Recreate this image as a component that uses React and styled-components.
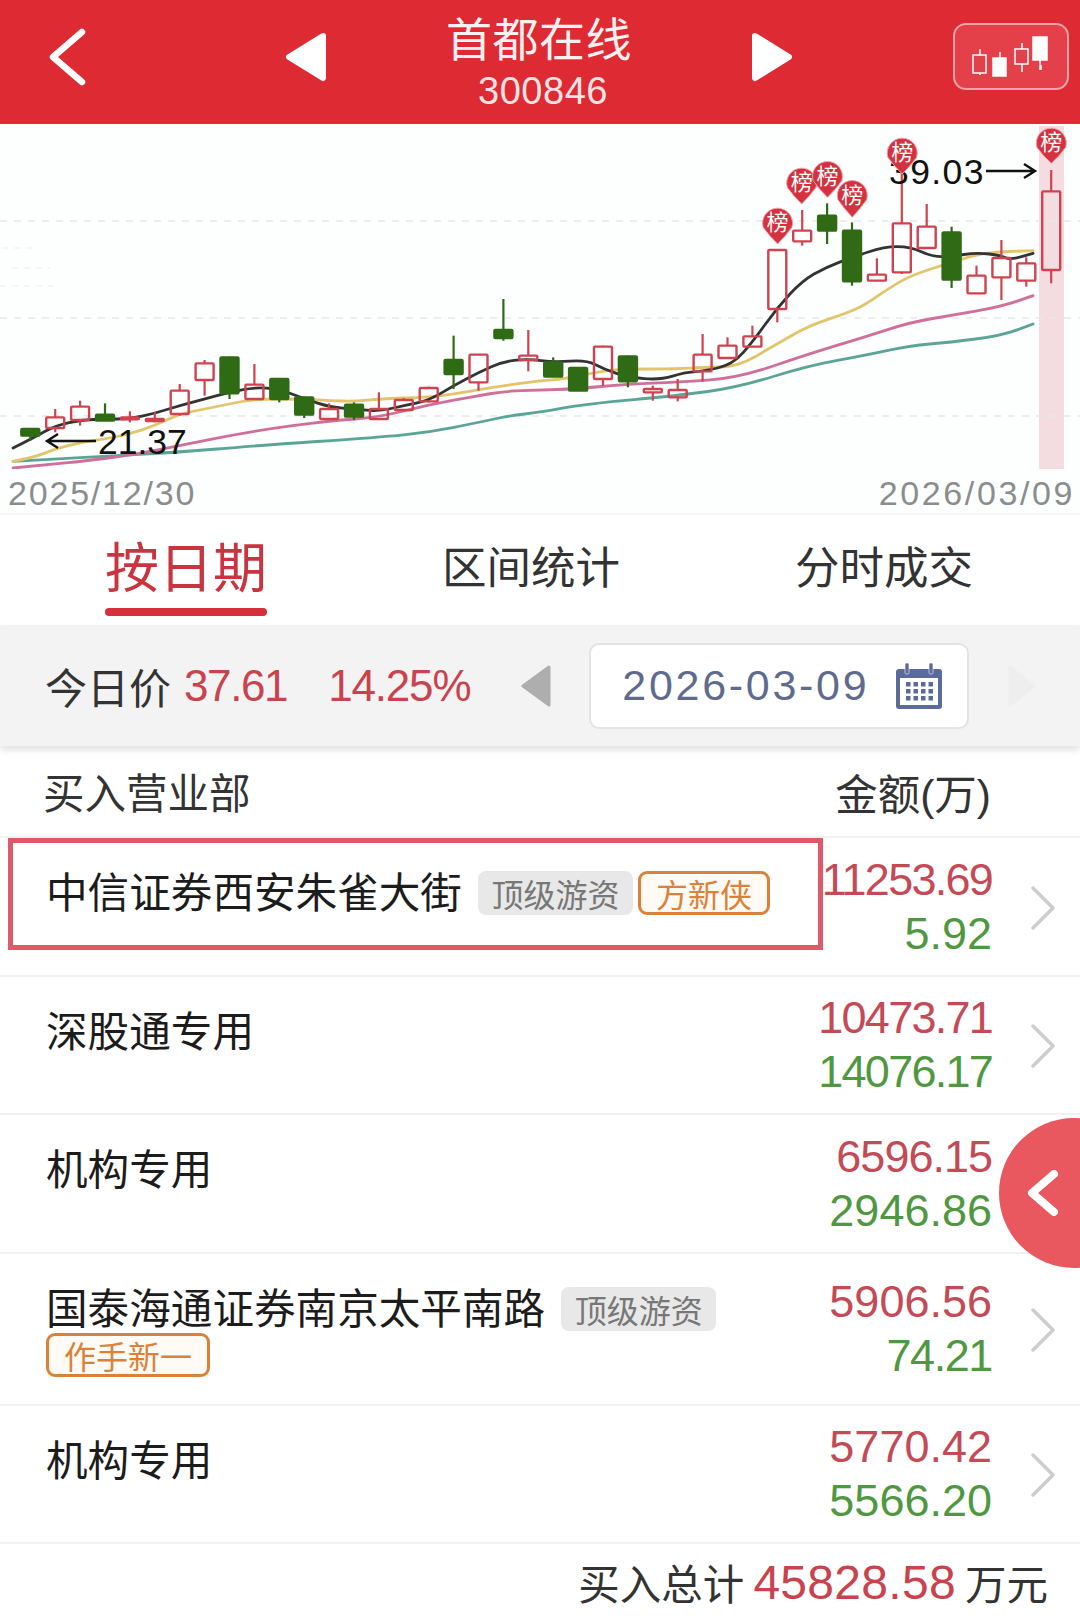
import React from 'react';
import styled, { createGlobalStyle } from 'styled-components';

const Global = createGlobalStyle`
  html, body { margin: 0; padding: 0; background: #fff; }
  body { font-family: "Liberation Sans", "Noto Sans CJK SC", sans-serif; color: #222; }
`;

const Page = styled.div`
  position: relative;
  width: 1080px;
  height: 1620px;
  overflow: hidden;
  background: #fff;
`;

/* ---------- header ---------- */
const Header = styled.header`
  display: grid;
  grid-template-columns: 236px 43px 1fr 43px 286px;
  align-items: center;
  height: 124px;
  padding: 0 0 10px 48px;
  background: #de2a33;
  box-sizing: border-box;
  border-bottom: 1px solid #d9353d;
`;
const TitleBlock = styled.div`
  display: flex;
  flex-direction: column;
  align-items: center;
  color: #fff;
  margin-top: 10px;
`;
const Title = styled.div`
  font-size: 46px;
  line-height: 56px;
  color: #fdf0f0;
  letter-spacing: 0.5px;
`;
const Code = styled.div`
  font-size: 38px;
  line-height: 40px;
  margin: 3px 0 0 8px;
  letter-spacing: 0.5px;
  color: #fbe3e3;
`;
const KlineButton = styled.div`
  justify-self: end;
  display: flex;
  width: 116px;
  height: 67px;
  margin-right: 11px;
  box-sizing: border-box;
  border: 2px solid #f3a3a8;
  border-radius: 13px;
  background: #e3404a;
`;

/* ---------- chart ---------- */
const ChartPanel = styled.section`
  background: #fdfefe;
  border-bottom: 2px solid #f4f5f5;
  height: 391px;
  box-sizing: border-box;
`;
const ChartSvg = styled.svg`
  display: block;
  width: 1080px;
  height: 345px;
`;
const ChartLabel = styled.text`
  font-family: "Liberation Sans", sans-serif;
  font-size: 35.5px;
  fill: #111;
`;
const PinText = styled.text`
  font-family: "Noto Sans CJK SC", sans-serif;
  font-size: 22px;
  fill: #fff;
  text-anchor: middle;
`;
const DateAxis = styled.div`
  display: flex;
  justify-content: space-between;
  padding: 5px 5px 0 8px;
  font-size: 34px;
  line-height: 38px;
  color: #8a8d8e;
`;
const AxisDate = styled.span`
  letter-spacing: ${p => p.$spacing}px;
`;

/* ---------- tabs ---------- */
const Tabs = styled.nav`
  display: flex;
  justify-content: space-between;
  align-items: flex-start;
  height: 110px;
  padding: 24px 107px 0 105px;
  box-sizing: border-box;
`;
const Tab = styled.div`
  display: flex;
  flex-direction: column;
  align-items: center;
  font-size: ${p => (p.$active ? '54px' : '44.5px')};
  line-height: 60px;
  color: ${p => (p.$active ? '#c9343e' : '#333')};
`;
const TabBar = styled.div`
  width: 162px;
  height: 8px;
  margin-top: 9px;
  border-radius: 4px;
  background: #d42f3a;
`;

/* ---------- toolbar ---------- */
const Toolbar = styled.div`
  position: relative;
  display: flex;
  align-items: center;
  height: 121px;
  padding-left: 45px;
  box-sizing: border-box;
  background: #f3f3f3;
  box-shadow: 0 5px 6px rgba(0, 0, 0, 0.1);
`;
const ToolLabel = styled.span`
  font-size: 42px;
  color: #333;
`;
const ToolValue = styled.span`
  font-size: 44px;
  color: #c9434e;
  margin-left: ${p => p.$gap}px;
  letter-spacing: ${p => p.$spacing}px;
`;
const ArrowLeft = styled.svg`
  display: block;
  margin-left: 50px;
`;
const ArrowRight = styled.svg`
  display: block;
`;
const DateBox = styled.div`
  display: flex;
  align-items: center;
  justify-content: space-between;
  width: 380px;
  height: 86px;
  margin: 0 38px 0 37px;
  padding: 0 24px 0 31px;
  box-sizing: border-box;
  background: #fff;
  border: 2px solid #e2e3e5;
  border-radius: 10px;
  font-size: 43px;
  letter-spacing: 2.7px;
  color: #5f6b8e;
`;

/* ---------- table ---------- */
const TableHead = styled.div`
  display: flex;
  justify-content: space-between;
  align-items: center;
  height: 92px;
  padding: 0 89px 0 43px;
  box-sizing: border-box;
  border-bottom: 2px solid #f1f1f1;
  font-size: 41.5px;
  color: #333;
`;
const HeadAmount = styled.span`
  font-size: 42.5px;
`;
const Row = styled.div`
  position: relative;
  display: flex;
  align-items: center;
  min-height: ${p => p.$height}px;
  box-sizing: border-box;
  padding-left: 46px;
  border-bottom: 2px solid #f1f1f1;
`;
const NameCell = styled.div`
  align-self: flex-start;
  display: flex;
  flex-wrap: wrap;
  align-items: center;
  column-gap: 5px;
  row-gap: 0;
  width: 750px;
  padding: 33px 0 25px;
`;
const Name = styled.span`
  font-size: 41.6px;
  line-height: 46px;
  color: #1c1c1c;
  margin-right: 11px;
`;
const TagGray = styled.span`
  display: inline-flex;
  align-items: center;
  justify-content: center;
  width: 155px;
  height: 44px;
  margin-bottom: 2px;
  border-radius: 8px;
  background: #e8e8e8;
  font-size: 32px;
  color: #777;
`;
const TagOrange = styled.span`
  display: inline-flex;
  align-items: center;
  justify-content: center;
  height: 44px;
  margin-bottom: 2px;
  padding: 0 15px;
  box-sizing: border-box;
  border: 3px solid #d9823b;
  border-radius: 9px;
  background: #fffaf4;
  font-size: 32px;
  color: #d9823b;
`;
const Amounts = styled.div`
  flex: 1;
  display: flex;
  flex-direction: column;
  align-items: flex-end;
  font-size: 45px;
  line-height: 54px;
`;
const Amount = styled.span`
  color: ${p => (p.$buy ? '#c44a55' : '#4f983f')};
  letter-spacing: ${p => p.$spacing}px;
`;
const ChevronWrap = styled.div`
  display: flex;
  width: 88px;
  padding: 2px 0 0 38px;
  box-sizing: border-box;
`;
const Highlight = styled.div`
  position: absolute;
  left: 8px;
  top: 0;
  width: 815px;
  height: 112px;
  box-sizing: border-box;
  border: 5px solid #de5a68;
  pointer-events: none;
`;
const Total = styled.footer`
  display: flex;
  justify-content: flex-end;
  align-items: center;
  gap: 9px;
  height: 76px;
  padding-right: 32px;
  box-sizing: border-box;
  font-size: 41.5px;
  color: #333;
`;
const TotalValue = styled.span`
  font-size: 48px;
  letter-spacing: 0.3px;
  color: #c9434e;
`;
const FloatButton = styled.div`
  position: absolute;
  left: 999px;
  top: 1118px;
  width: 150px;
  height: 150px;
  border-radius: 50%;
  background: #e9575f;
  display: flex;
  align-items: center;
  padding-left: 27px;
  box-sizing: border-box;
`;

/* ---------- drawings ---------- */
const Triangle = ({ dir, fill = '#fff', w = 43, h = 50 }) => (
  <svg width={w} height={h} viewBox="0 0 43 50" style={{ display: 'block' }}>
    <path
      d={dir === 'left' ? 'M39 4 L5 25 L39 46 Z' : 'M4 4 L38 25 L4 46 Z'}
      fill={fill}
      stroke={fill}
      strokeWidth="6"
      strokeLinejoin="round"
    />
  </svg>
);

const BackIcon = () => (
  <svg width="38" height="58" viewBox="0 0 38 58" style={{ display: 'block' }}>
    <path d="M34 4 L5 29 L34 54" fill="none" stroke="#fff" strokeWidth="6.5" strokeLinecap="round" strokeLinejoin="round" />
  </svg>
);

const KlineIcon = () => (
  <svg width="112" height="63" viewBox="0 0 112 63" style={{ display: 'block' }}>
    <g stroke="#fff" strokeWidth="1.5" fill="none">
      <path d="M25 24 V30 M25 48 V50" />
      <rect x="18" y="30" width="13" height="18" />
      <path d="M45 27 V33" />
      <rect x="38" y="33" width="13" height="18" fill="#fff" />
      <path d="M67 18 V24 M67 39 V47" />
      <rect x="60" y="24" width="13" height="15" />
      <path d="M86 40 V45" />
      <rect x="78" y="12" width="14" height="23" fill="#fff" />
      <path d="M85 35 V45" />
    </g>
  </svg>
);

const Calendar = () => (
  <svg width="48" height="46" viewBox="0 0 48 46" style={{ display: 'block' }}>
    <rect x="1" y="6" width="46" height="40" rx="3" fill="#5a6a9c" />
    <rect x="5" y="15" width="38" height="27" fill="#fff" />
    <rect x="10" y="0" width="4" height="11" rx="1.5" fill="#5a6a9c" stroke="#fff" strokeWidth="0.6" />
    <rect x="34" y="0" width="4" height="11" rx="1.5" fill="#5a6a9c" stroke="#fff" strokeWidth="0.6" />
    {[19, 26, 33].map(y =>
      [11, 18.5, 26, 33.5].map(x => <rect key={`${x}-${y}`} x={x} y={y} width="4.5" height="4.5" fill="#5a6a9c" />)
    )}
  </svg>
);

const Chevron = () => (
  <svg width="26" height="44" viewBox="0 0 26 44" style={{ display: 'block' }}>
    <path d="M3 2 L23 22 L3 42" fill="none" stroke="#cdcdcd" strokeWidth="3.5" strokeLinecap="round" strokeLinejoin="round" />
  </svg>
);

const FloatChevron = () => (
  <svg width="32" height="46" viewBox="0 0 32 46" style={{ display: 'block' }}>
    <path d="M28 4 L6 23 L28 42" fill="none" stroke="#fff" strokeWidth="8" strokeLinejoin="round" strokeLinecap="round" />
  </svg>
);

/* Chart data is measured in a 2.904x / 3x space: x in 0..3136, y in 0..1035 */
const X = zx => zx / 2.904;
const Y = zy => zy / 3;

const candles = [
  ['g', 915, 915, 935, 950], ['r', 855, 880, 912, 925], ['r', 830, 848, 888, 905], ['g', 838, 872, 890, 890],
  ['r', 862, 880, 883, 895], ['r', 865, 885, 888, 895], ['r', 780, 800, 870, 875], ['r', 708, 718, 768, 815],
  ['g', 698, 700, 808, 825], ['r', 720, 782, 825, 825], ['g', 765, 765, 825, 835], ['g', 818, 820, 872, 882],
  ['r', 838, 855, 885, 888], ['g', 835, 842, 878, 888], ['r', 805, 855, 885, 885], ['r', 822, 828, 858, 862],
  ['r', 788, 792, 832, 835], ['g', 635, 708, 750, 795], ['r', 690, 692, 775, 800], ['g', 525, 618, 642, 650],
  ['r', 618, 695, 708, 742], ['g', 700, 715, 758, 760], ['g', 730, 732, 800, 800], ['r', 665, 668, 765, 785],
  ['g', 695, 697, 772, 790], ['r', 785, 795, 805, 830], ['r', 765, 798, 820, 832], ['r', 630, 692, 742, 772],
  ['r', 640, 665, 702, 705], ['r', 605, 637, 668, 670], ['r', 378, 378, 555, 595], ['r', 258, 320, 352, 365],
  ['g', 238, 275, 320, 360], ['g', 295, 320, 472, 485], ['r', 403, 452, 470, 472], ['r', 130, 298, 445, 450],
  ['r', 240, 308, 372, 375], ['g', 308, 325, 467, 492], ['r', 425, 455, 508, 508], ['r', 348, 402, 460, 528],
  ['r', 400, 418, 470, 488], ['r', 138, 202, 438, 478],
];

const R = 1568;
const lines = [
  {
    color: '#5aa596',
    pts: [[38, 1012], [235, 1000], [520, 985], [740, 965], [1100, 940], [1245, 925], [1391, 895], [1480, 875], [R, 865],
      [R + 130, 840], [R + 400, 815], [R + 575, 790], [R + 780, 725], [R + 940, 695], [R + 1075, 665], [R + 1190, 655], [R + 1340, 635], [R + 1432, 600]],
  },
  {
    color: '#cf6f9a',
    pts: [[38, 1032], [160, 1020], [235, 1012], [375, 995], [520, 965], [740, 920], [960, 890], [1100, 880], [1245, 842], [1391, 815], [1463, 802], [R, 798],
      [R + 100, 795], [R + 255, 780], [R + 400, 775], [R + 575, 762], [R + 780, 690], [R + 940, 640], [R + 1075, 595], [R + 1190, 575], [R + 1340, 548], [R + 1432, 515]],
  },
  {
    color: '#e2c46a',
    pts: [[38, 1012], [100, 1000], [160, 975], [235, 955], [305, 945], [375, 930], [450, 905], [520, 870], [595, 855], [665, 840], [740, 825], [885, 825], [960, 830], [1030, 832], [1100, 825], [1172, 822], [1245, 820], [1317, 810], [1391, 797], [1463, 785], [R, 770],
      [R + 70, 765], [R + 185, 740], [R + 255, 735], [R + 400, 735], [R + 472, 730], [R + 575, 728], [R + 680, 665], [R + 780, 605], [R + 885, 570], [R + 940, 545], [R + 1010, 495], [R + 1075, 455], [R + 1195, 415], [R + 1290, 385], [R + 1432, 380]],
  },
  {
    color: '#333',
    pts: [[38, 972], [100, 940], [160, 905], [235, 888], [305, 885], [375, 885], [450, 868], [520, 845], [595, 825], [665, 805], [740, 790], [810, 795], [885, 825], [960, 850], [1030, 855], [1100, 862], [1172, 845], [1245, 830], [1317, 785], [1391, 745], [1463, 712], [1536, 705],
      [R + 40, 715], [R + 135, 708], [R + 185, 735], [R + 255, 760], [R + 350, 768], [R + 420, 745], [R + 472, 742], [R + 560, 722], [R + 620, 650], [R + 690, 550], [R + 762, 470], [R + 830, 430], [R + 907, 400], [R + 1000, 368], [R + 1075, 368], [R + 1140, 398], [R + 1195, 398], [R + 1268, 385], [R + 1340, 395], [R + 1365, 408], [R + 1432, 388]],
  },
];

const smooth = pts => {
  const p = pts.map(([x, y]) => [X(x), Y(y)]);
  let d = `M${p[0][0]} ${p[0][1]}`;
  for (let i = 1; i < p.length - 1; i++) {
    const mx = (p[i][0] + p[i + 1][0]) / 2;
    const my = (p[i][1] + p[i + 1][1]) / 2;
    d += ` Q${p[i][0]} ${p[i][1]} ${mx} ${my}`;
  }
  const l = p[p.length - 1];
  return `${d} L${l[0]} ${l[1]}`;
};

const pins = [
  [R + 690, 295, 360], [R + 760, 175, 240], [R + 835, 155, 220], [R + 907, 212, 280], [R + 1052, 85, 150], [R + 1485, 55, 118],
];

const Pin = ({ zx, zy, tip }) => {
  const cx = X(zx);
  const cy = Y(zy);
  const ty = Y(tip);
  const r = 15;
  return (
    <g>
      <path
        d={`M${cx - r + 0.6} ${cy + 5} A${r} ${r} 0 1 1 ${cx + r - 0.6} ${cy + 5} Q${cx + 8} ${cy + 14} ${cx} ${ty} Q${cx - 8} ${cy + 14} ${cx - r + 0.6} ${cy + 5} Z`}
        fill="#d5323f"
        stroke="#f0a3aa"
        strokeWidth="1"
      />
      <PinText x={cx} y={cy + 8}>榜</PinText>
    </g>
  );
};

const Candle = ({ i, type, wt, bt, bb, wb }) => {
  const x = 30.3 + 24.9 * i;
  const color = type === 'g' ? '#2f6b14' : '#cf4350';
  const top = Y(bt);
  const h = Math.max(Y(bb) - top, 2);
  return (
    <g>
      <line x1={x} x2={x} y1={Y(wt)} y2={top} stroke={color} strokeWidth="2.2" />
      <line x1={x} x2={x} y1={top + h} y2={Y(wb)} stroke={color} strokeWidth="2.2" />
      <rect
        x={x - 9}
        y={top}
        width="18"
        height={h}
        rx="1"
        fill={type === 'g' ? color : 'none'}
        stroke={color}
        strokeWidth="2.4"
      />
    </g>
  );
};

const Chart = () => (
  <ChartSvg viewBox="0 0 1080 345">
    <rect x="1039" y="2" width="25" height="343" fill="#f5dce1" />
    {[97, 194, 292].map(y => (
      <line key={y} x1="0" x2="1080" y1={y} y2={y} stroke="#e6e7e7" strokeWidth="1.4" strokeDasharray="7 7" />
    ))}
    <line x1="2" x2="36" y1="124" y2="124" stroke="#eeeeee" strokeWidth="1" strokeDasharray="6 6" />
    <line x1="12" x2="50" y1="144" y2="144" stroke="#eeeeee" strokeWidth="1" strokeDasharray="6 6" />
    <line x1="0" x2="58" y1="162" y2="162" stroke="#eeeeee" strokeWidth="1" strokeDasharray="6 6" />
    {lines.map(l => (
      <path key={l.color} d={smooth(l.pts)} fill="none" stroke={l.color} strokeWidth="2.8" strokeLinecap="round" />
    ))}
    {candles.map(([t, wt, bt, bb, wb], i) => (
      <Candle key={i} i={i} type={t} wt={wt} bt={bt} bb={bb} wb={wb} />
    ))}
    <ChartLabel x="98" y="330">21.37</ChartLabel>
    <path d="M96 317 H47 M58 310 L47 317 L58 324" fill="none" stroke="#111" strokeWidth="2.4" />
    <ChartLabel x="889" y="60" letterSpacing="1.4">39.03</ChartLabel>
    <path d="M986 47 H1035 M1024 40 L1035 47 L1024 54" fill="none" stroke="#111" strokeWidth="2.4" />
    {pins.map(([zx, zy, tip]) => (
      <Pin key={zx} zx={zx} zy={zy} tip={tip} />
    ))}
  </ChartSvg>
);

const spacingFor = text => {
  const ones = text.split('1').length - 1;
  return -(7 * Math.min(ones, 2)) / text.length;
};

const rows = [
  { name: '中信证券西安朱雀大街', top: true, tags: ['方新侠'], buy: '11253.69', sell: '5.92', height: 139, mark: true },
  { name: '深股通专用', buy: '10473.71', sell: '14076.17', height: 138 },
  { name: '机构专用', buy: '6596.15', sell: '2946.86', height: 139 },
  { name: '国泰海通证券南京太平南路', top: true, tags: ['作手新一'], buy: '5906.56', sell: '74.21', height: 152 },
  { name: '机构专用', buy: '5770.42', sell: '5566.20', height: 138 },
];

export default function App() {
  return (
    <Page>
      <Global />
      <Header>
        <BackIcon />
        <Triangle dir="left" />
        <TitleBlock>
          <Title>首都在线</Title>
          <Code>300846</Code>
        </TitleBlock>
        <Triangle dir="right" />
        <KlineButton><KlineIcon /></KlineButton>
      </Header>

      <ChartPanel>
        <Chart />
        <DateAxis>
          <AxisDate $spacing={1.8}>2025/12/30</AxisDate>
          <AxisDate $spacing={2.6}>2026/03/09</AxisDate>
        </DateAxis>
      </ChartPanel>

      <Tabs>
        <Tab $active>按日期<TabBar /></Tab>
        <Tab>区间统计</Tab>
        <Tab>分时成交</Tab>
      </Tabs>

      <Toolbar>
        <ToolLabel>今日价</ToolLabel>
        <ToolValue $gap={13} $spacing={spacingFor('37.61')}>37.61</ToolValue>
        <ToolValue $gap={41} $spacing={spacingFor('14.25%')}>14.25%</ToolValue>
        <ArrowLeft width="32" height="42" viewBox="0 0 32 42">
          <path d="M29 2 L3 21 L29 40 Z" fill="#aeaeae" stroke="#aeaeae" strokeWidth="3" strokeLinejoin="round" />
        </ArrowLeft>
        <DateBox>
          <span>2026-03-09</span>
          <Calendar />
        </DateBox>
        <ArrowRight width="30" height="42" viewBox="0 0 30 42">
          <path d="M3 2 L27 21 L3 40 Z" fill="#eeeeee" stroke="#eeeeee" strokeWidth="3" strokeLinejoin="round" />
        </ArrowRight>
      </Toolbar>

      <TableHead>
        <span>买入营业部</span>
        <HeadAmount>金额(万)</HeadAmount>
      </TableHead>

      {rows.map((r, i) => (
        <Row key={i} $height={r.height}>
          <NameCell>
            <Name>{r.name}</Name>
            {r.top && <TagGray>顶级游资</TagGray>}
            {r.tags && r.tags.map(t => <TagOrange key={t}>{t}</TagOrange>)}
          </NameCell>
          <Amounts>
            <Amount $buy $spacing={spacingFor(r.buy)}>{r.buy}</Amount>
            <Amount $spacing={spacingFor(r.sell)}>{r.sell}</Amount>
          </Amounts>
          <ChevronWrap><Chevron /></ChevronWrap>
          {r.mark && <Highlight />}
        </Row>
      ))}

      <Total>
        <span>买入总计</span>
        <TotalValue>45828.58</TotalValue>
        <span>万元</span>
      </Total>

      <FloatButton><FloatChevron /></FloatButton>
    </Page>
  );
}
